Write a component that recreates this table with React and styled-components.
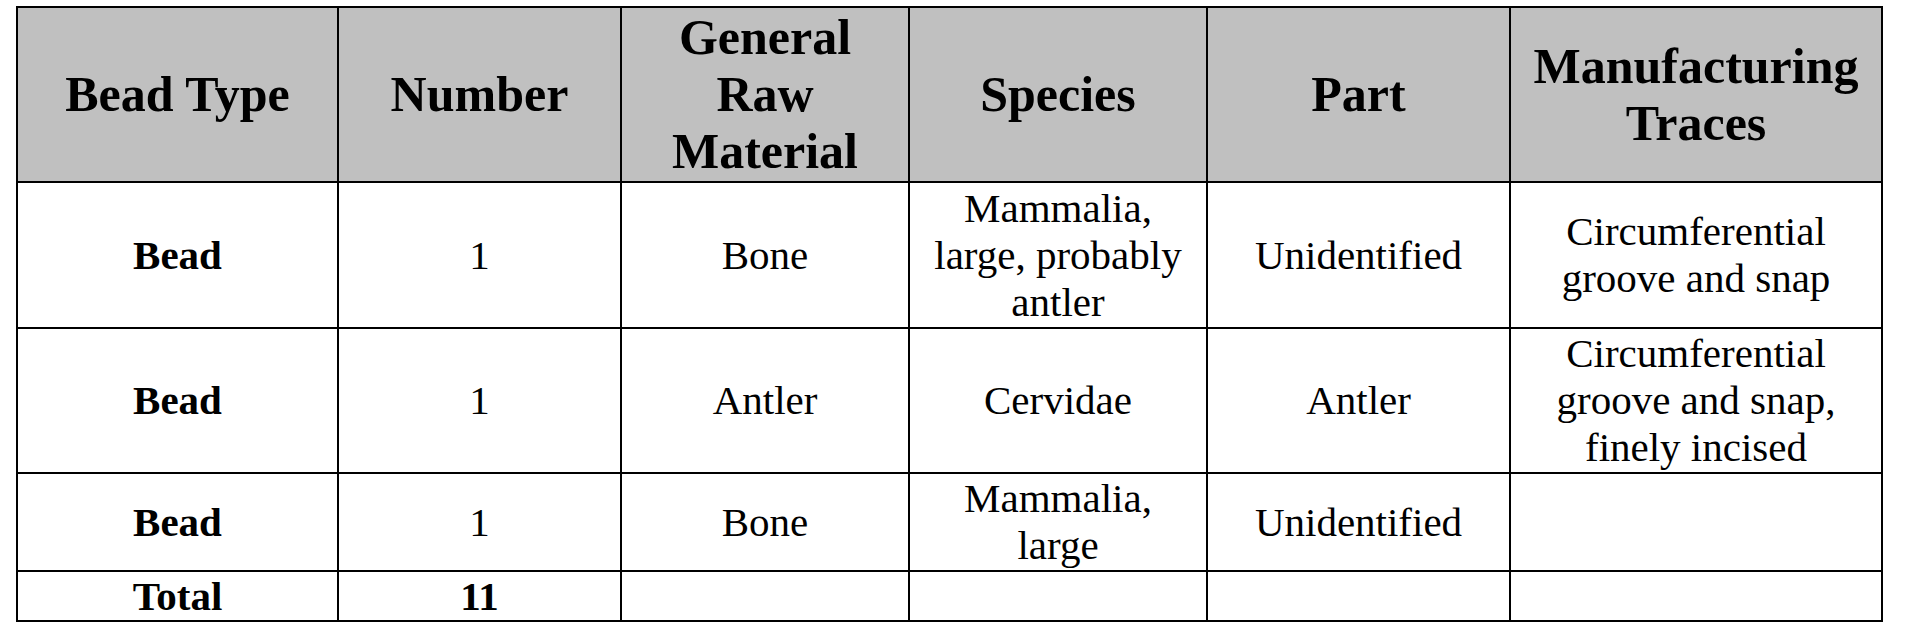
import React from 'react';
import styled, { createGlobalStyle } from 'styled-components';

const GlobalStyle = createGlobalStyle`
  body {
    margin: 0;
    background: #fff;
    font-family: "Liberation Serif", "Times New Roman", serif;
    color: #000;
  }
`

const Page = styled.div`
  padding: 6px 0 0 16px;
`

const Table = styled.table`
  width: 1865px;
  border-collapse: collapse;
  table-layout: fixed;
  border: 2px solid #000;
`

const Row = styled.tr`
  height: ${props => props.h}px;
`

const HeadCell = styled.th`
  background: #c0c0c0;
  border: 2px solid #000;
  font-size: 50px;
  line-height: 57px;
  font-weight: bold;
  text-align: center;
  vertical-align: middle;
  padding: 0 12px;
`

const Cell = styled.td`
  border: 2px solid #000;
  font-size: 41px;
  line-height: 47px;
  font-weight: ${props => props.bold ? 'bold' : 'normal'};
  text-align: center;
  vertical-align: middle;
  padding: 0 12px;
`

const widths = [321, 283, 288, 298, 303, 372];
const headers = ['Bead Type', 'Number', 'General Raw Material', 'Species', 'Part', 'Manufacturing Traces'];

const rows = [
  { h: 146, cells: ['Bead', '1', 'Bone', 'Mammalia, large, probably antler', 'Unidentified', 'Circumferential groove and snap'] },
  { h: 145, cells: ['Bead', '1', 'Antler', 'Cervidae', 'Antler', 'Circumferential groove and snap, finely incised'] },
  { h: 98, cells: ['Bead', '1', 'Bone', 'Mammalia, large', 'Unidentified', ''] },
];

const App = () => {
  return (
    <>
      <GlobalStyle />
      <Page>
        <Table>
          <colgroup>
            {widths.map((w, i) => <col key={i} style={{ width: w }} />)}
          </colgroup>
          <thead>
            <Row h={175}>
              {headers.map(t => <HeadCell key={t}>{t}</HeadCell>)}
            </Row>
          </thead>
          <tbody>
            {rows.map((r, i) => (
              <Row key={i} h={r.h}>
                {r.cells.map((c, j) => <Cell key={j} bold={j === 0}>{c}</Cell>)}
              </Row>
            ))}
            <Row h={50}>
              <Cell bold>Total</Cell>
              <Cell bold>11</Cell>
              <Cell />
              <Cell />
              <Cell />
              <Cell />
            </Row>
          </tbody>
        </Table>
      </Page>
    </>
  )
}

export default App;
